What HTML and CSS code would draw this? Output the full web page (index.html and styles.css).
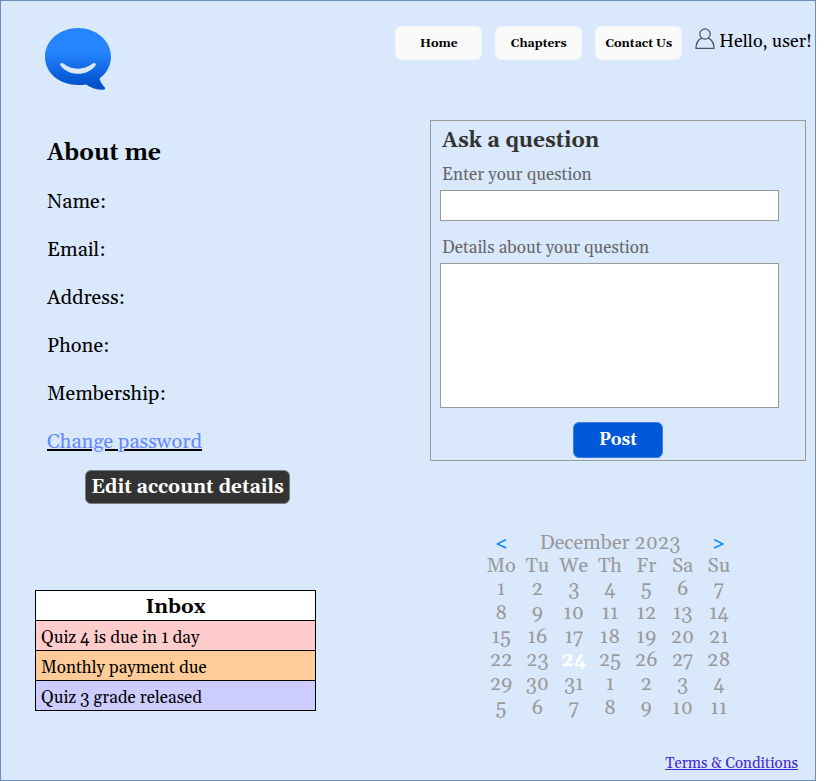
FILE: index.html
```html
<!DOCTYPE html>
<html lang="en">
<head>
<meta charset="utf-8">
<meta name="viewport" content="width=device-width, initial-scale=1">
<title>About me</title>
<link rel="stylesheet" href="styles.css">
</head>
<body>
<div class="page">
  <header class="header">
    <svg class="logo" viewBox="0 0 66 62" aria-hidden="true">
      <defs>
        <linearGradient id="bubble" x1="0" y1="0" x2="0" y2="1">
          <stop offset="0.38" stop-color="#2684ff"/>
          <stop offset="0.92" stop-color="#0052cc"/>
        </linearGradient>
      </defs>
      <path fill="url(#bubble)" d="M33 0C51 0 66 12.500 66 28.500C66 37.500 61.500 45.500 54.500 50.500C55.500 54.500 57.500 57 59.500 59C60.800 60.500 60 61.700 58 61.700C51.500 61.700 46 60 41 56.400C18 60 0 47 0 28.500C0 12.500 15 0 33 0Z"/>
      <path fill="#dae8fc" d="M15.500 37.500C14.300 35.500 16.300 34 18.200 35.600C27.500 42.500 38.500 42.500 47.800 35.600C49.700 34 51.700 35.500 50.500 37.500C42 48.600 24 48.600 15.500 37.500Z"/>
    </svg>
    <nav class="nav">
      <button class="nav-button" type="button">Home</button>
      <button class="nav-button" type="button">Chapters</button>
      <button class="nav-button" type="button">Contact Us</button>
    </nav>
    <div class="user">
      <svg class="user-icon" viewBox="0 0 20 22" aria-hidden="true" fill="none" stroke="#445464" stroke-width="1.200">
        <circle cx="10" cy="6" r="5.200"/>
        <path d="M6.700 10.100C3 11.800 1 15.500 1 20.300H19C19 15.500 17 11.800 13.300 10.100"/>
      </svg>
      <span>Hello, user!</span>
    </div>
  </header>

  <main class="main">
    <section class="account">
      <h1 class="account-title">About me</h1>
      <ul class="fields">
        <li>Name:</li>
        <li>Email:</li>
        <li>Address:</li>
        <li>Phone:</li>
        <li>Membership:</li>
        <li><a class="password-link" href="#password">Change password</a></li>
      </ul>
      <button class="edit-button" type="button">Edit account details</button>
    </section>

    <form class="ask">
      <h2 class="ask-title">Ask a question</h2>
      <label class="ask-label" for="question">Enter your question</label>
      <input class="ask-input" id="question" type="text">
      <label class="ask-label" for="details">Details about your question</label>
      <textarea class="ask-input ask-details" id="details"></textarea>
      <button class="post-button" type="button">Post</button>
    </form>

    <table class="inbox">
      <thead><tr><th>Inbox</th></tr></thead>
      <tbody>
        <tr class="urgent"><td>Quiz 4 is due in 1 day</td></tr>
        <tr class="payment"><td>Monthly payment due</td></tr>
        <tr class="grade"><td>Quiz 3 grade released</td></tr>
      </tbody>
    </table>

    <table class="calendar">
      <thead>
        <tr>
          <td><button class="month-button" type="button">&lt;</button></td>
          <th colspan="5">December 2023</th>
          <td><button class="month-button" type="button">&gt;</button></td>
        </tr>
        <tr><th>Mo</th><th>Tu</th><th>We</th><th>Th</th><th>Fr</th><th>Sa</th><th>Su</th></tr>
      </thead>
      <tbody>
        <tr><td>1</td><td>2</td><td>3</td><td>4</td><td>5</td><td>6</td><td>7</td></tr>
        <tr><td>8</td><td>9</td><td>10</td><td>11</td><td>12</td><td>13</td><td>14</td></tr>
        <tr><td>15</td><td>16</td><td>17</td><td>18</td><td>19</td><td>20</td><td>21</td></tr>
        <tr><td>22</td><td>23</td><td class="today">24</td><td>25</td><td>26</td><td>27</td><td>28</td></tr>
        <tr><td>29</td><td>30</td><td>31</td><td>1</td><td>2</td><td>3</td><td>4</td></tr>
        <tr><td>5</td><td>6</td><td>7</td><td>8</td><td>9</td><td>10</td><td>11</td></tr>
      </tbody>
    </table>
  </main>

  <footer class="footer"><a href="#terms">Terms &amp; Conditions</a></footer>
</div>
</body>
</html>
```
FILE: styles.css
```css
* {
  box-sizing: border-box;
}

body {
  margin: 0;
  background: #fff;
  color: #000;
  font-family: Georgia, Gelasio, "Liberation Serif", serif;
  font-size: 20px;
}

button,
input,
textarea {
  font-family: inherit;
}

h1,
h2 {
  margin: 0;
}

.page {
  display: flex;
  flex-direction: column;
  min-height: 100vh;
  margin-right: 10px;
  border: 1px solid #6c8ebf;
  background: #dae8fc;
}

.header {
  display: flex;
  align-items: flex-start;
  padding: 25px 3px 0 44px;
}

.logo {
  width: 66px;
  height: 62px;
  margin-top: 2px;
}

.nav {
  display: flex;
  gap: 13px;
  margin-left: auto;
}

.nav-button {
  width: 87px;
  height: 34px;
  padding: 0;
  border: 1px solid #f0f4fb;
  border-radius: 6px;
  background: #fafafa;
  color: #000;
  font-size: 12px;
  font-weight: bold;
}

.user {
  display: flex;
  align-items: center;
  gap: 4px;
  height: 30px;
  margin-left: 13px;
  font-size: 18px;
  white-space: nowrap;
}

.user-icon {
  width: 20px;
  height: 22px;
  margin-bottom: 4px;
}

.main {
  display: grid;
  grid-template-columns: minmax(0, 1fr) 376px;
  column-gap: 80px;
  padding: 30px 9px 0 34px;
}

.account {
  padding: 9px 0 0 12px;
}

.account-title {
  font-size: 23px;
  line-height: 49px;
}

.fields {
  margin: 0;
  padding: 0;
  list-style: none;
  line-height: 48px;
}

.password-link {
  color: #6388ff;
  text-decoration-color: #000;
}

.edit-button {
  display: block;
  width: 205px;
  height: 34px;
  margin: 4px 0 0 38px;
  padding: 0;
  border: 1px solid #777d88;
  border-radius: 6px;
  background: #333;
  color: #fff;
  font-size: 19px;
  font-weight: bold;
  white-space: nowrap;
}

.ask {
  display: flex;
  flex-direction: column;
  height: 341px;
  padding: 4px 26px 0 9px;
  border: 1px solid #999;
}

.ask-title {
  padding-left: 2px;
  color: #333;
  font-size: 21px;
  line-height: 33px;
}

.ask-label {
  padding: 3px 0 0 2px;
  color: #666;
  font-size: 17px;
  line-height: 29px;
}

.ask-input {
  width: 100%;
  height: 31px;
  margin: 0 0 10px;
  padding: 4px 8px;
  border: 1px solid #999;
  border-radius: 0;
  background: #fff;
  font-size: 17px;
}

.ask-details {
  height: 145px;
  margin-bottom: 14px;
  resize: none;
}

.post-button {
  width: 90px;
  height: 36px;
  margin-left: 133px;
  padding: 0;
  border: 1px solid #3d7fdf;
  border-radius: 6px;
  background: #0057d8;
  color: #fff;
  font-size: 17px;
  font-weight: bold;
}

.inbox {
  width: 281px;
  height: 121px;
  margin-top: 86px;
  border-collapse: collapse;
  font-size: 17px;
}

.inbox th,
.inbox td {
  height: 30px;
  padding: 5px 5px 0;
  border: 1px solid #000;
  line-height: 24px;
  text-align: left;
}

.inbox th {
  padding-top: 3px;
  background: #fff;
  font-size: 20px;
  text-align: center;
}

.urgent {
  background: #fcc;
}

.payment {
  background: #fc9;
}

.grade {
  background: #ccf;
}

.calendar {
  width: 254px;
  height: 188px;
  margin: 28px 0 0 53px;
  border-collapse: collapse;
  table-layout: fixed;
  color: #999;
  line-height: 23px;
  text-align: center;
}

.calendar th,
.calendar td {
  padding: 0;
  font-weight: normal;
}

.calendar .today {
  color: #fff;
  font-weight: bold;
}

.month-button {
  display: block;
  width: 100%;
  padding: 0;
  border: 0;
  background: none;
  color: #008cff;
  font-family: "Noto Sans", sans-serif;
  font-size: 20px;
  font-weight: 500;
  line-height: 21px;
}

.footer {
  margin-top: auto;
  padding: 0 17px 6px;
  font-size: 15px;
  line-height: 20px;
  text-align: right;
}

.footer a {
  color: #4127d8;
}
```
